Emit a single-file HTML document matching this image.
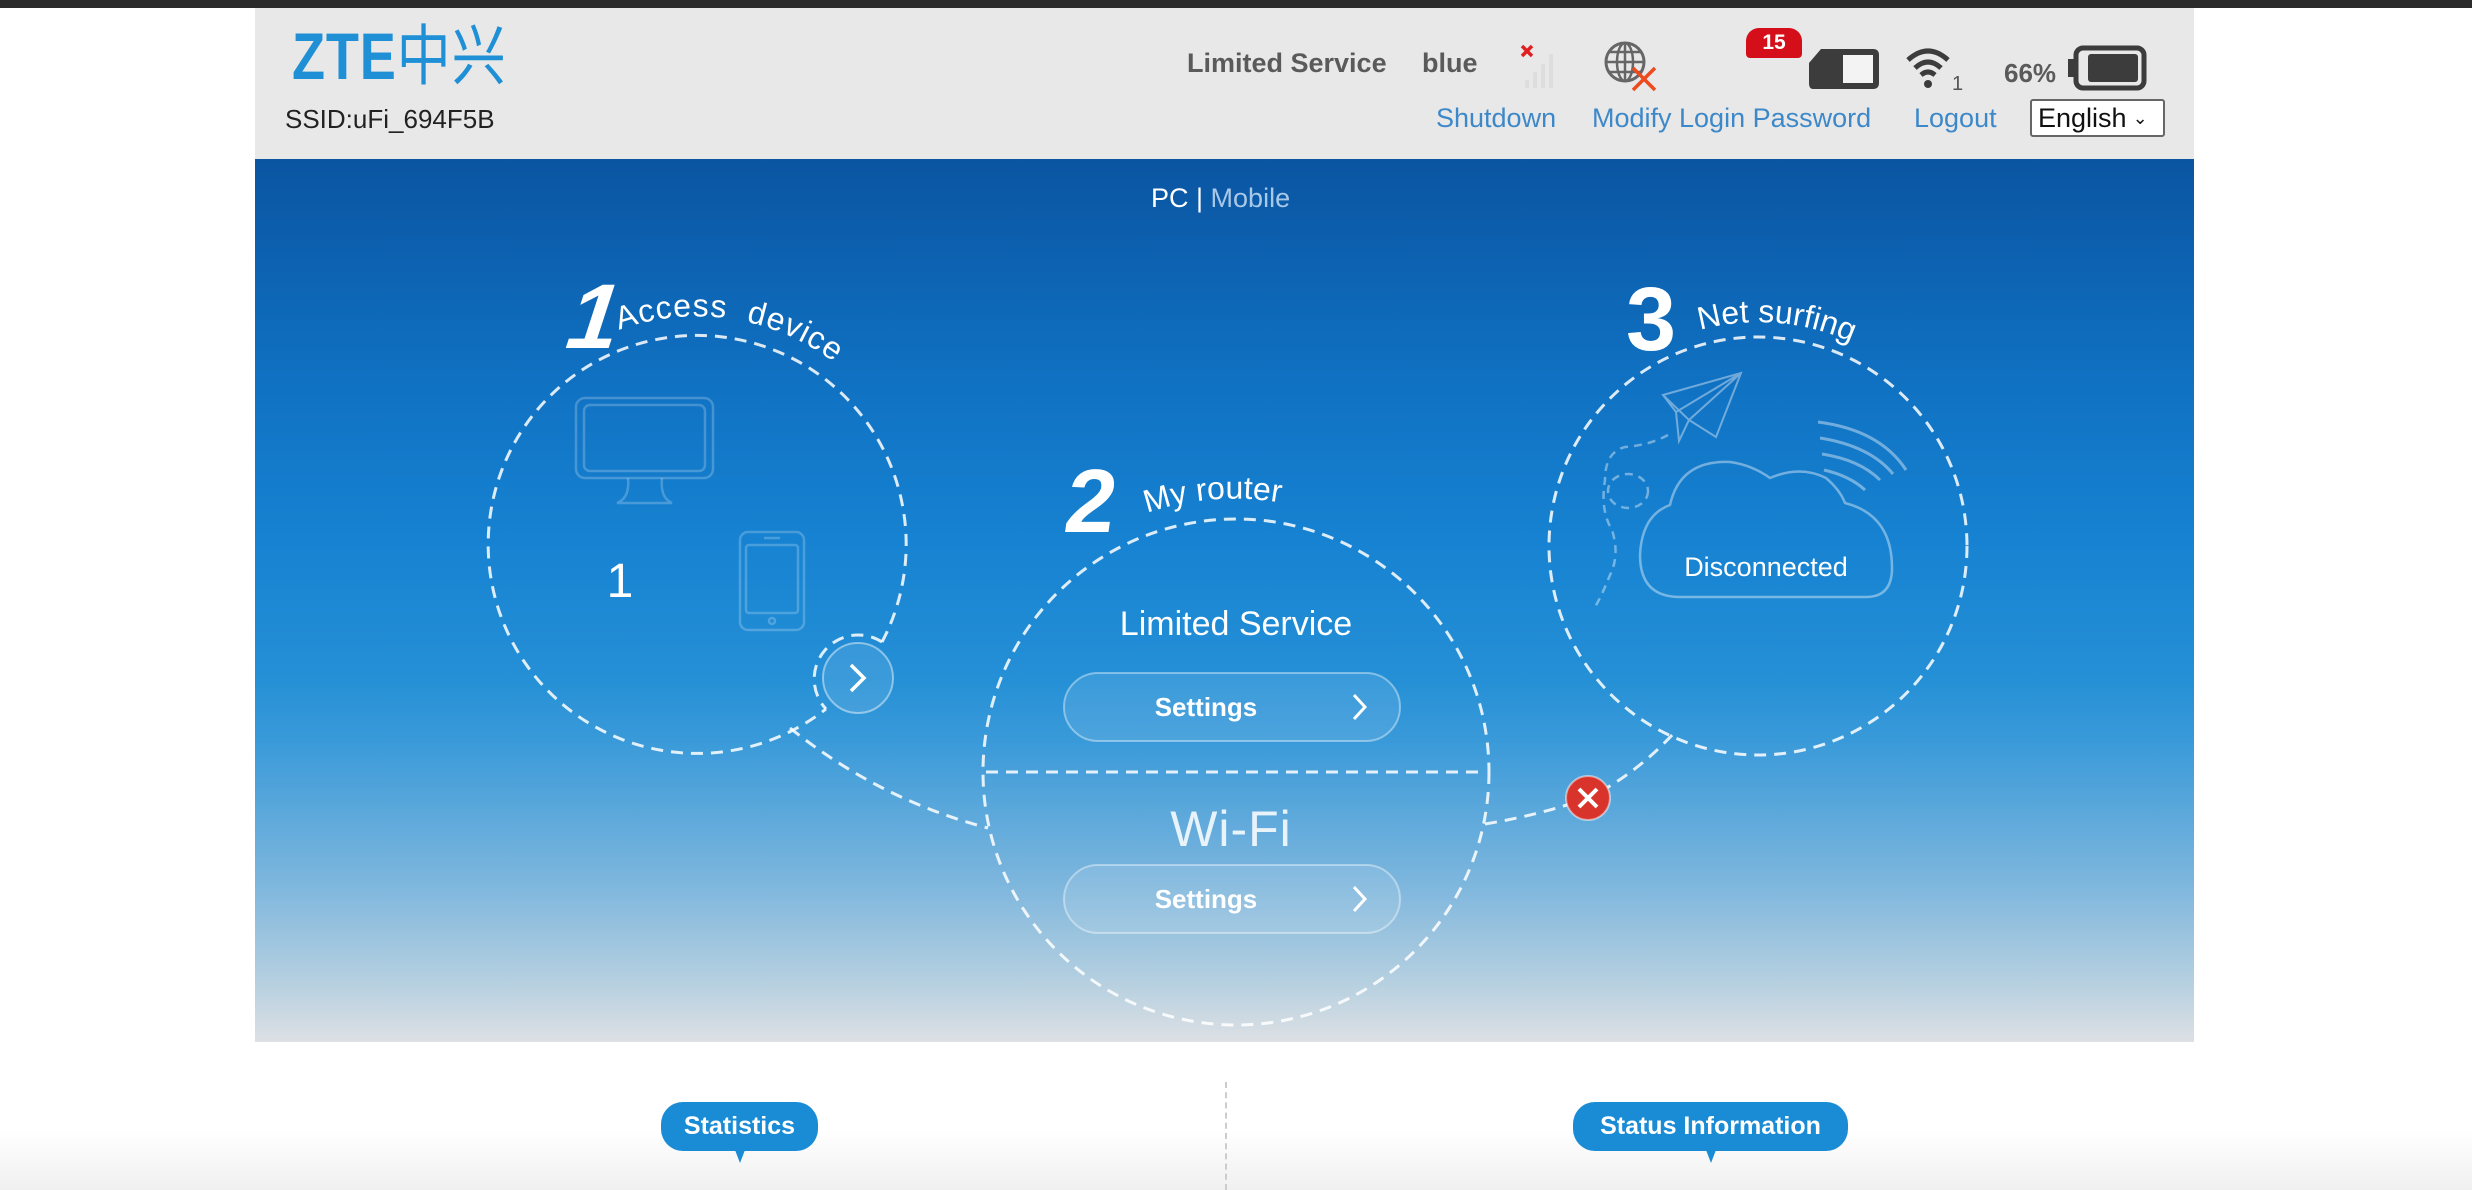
<!DOCTYPE html>
<html><head><meta charset="utf-8">
<style>
*{margin:0;padding:0;box-sizing:border-box}
html,body{width:2472px;height:1190px;overflow:hidden;background:#fff;font-family:"Liberation Sans",Arial,sans-serif;position:relative}
.topbar{position:absolute;left:0;top:0;width:2472px;height:8px;background:#2b2b2b}
.header{position:absolute;left:255px;top:8px;width:1939px;height:151px;background:#e8e8e8}
.panel{position:absolute;left:255px;top:159px;width:1939px;height:883px;
background:linear-gradient(to bottom,#0a55a2 0%,#1071c2 25%,#1783d2 44%,#2590d6 59%,#3a9ad9 66%,#7db6dd 82%,#b4cfe0 93%,#dde0e4 100%)}
.t{position:absolute;white-space:nowrap}
.link{color:#3d88c9;font-size:27px}
.bottomfade{position:absolute;left:0;top:1130px;width:2472px;height:60px;background:linear-gradient(to bottom,rgba(244,244,244,0),rgba(240,240,240,1));}
.bubble{position:absolute;background:#1a8cd6;color:#fff;font-weight:bold;font-size:25px;height:49px;line-height:49px;border-radius:22px;text-align:center}
.bubble:after{content:"";position:absolute;left:50%;margin-left:-5px;bottom:-12px;border-left:5px solid transparent;border-right:5px solid transparent;border-top:13px solid #1a8cd6}
</style></head><body>
<div class="topbar"></div>
<div class="header"></div>
<div class="t" style="left:292px;top:20px;font-size:66px;line-height:72px;font-weight:bold;color:#1f8fd6;letter-spacing:1px;font-family:'Liberation Sans','Noto Sans CJK SC',sans-serif;transform:scale(0.82,1);transform-origin:left top">ZTE<span style="font-weight:normal">中兴</span></div>
<div class="t" style="left:285px;top:104px;font-size:26px;color:#222">SSID:uFi_694F5B</div>

<div class="t" style="left:1187px;top:48px;font-size:27px;font-weight:bold;color:#5a5a5a">Limited Service</div>
<div class="t" style="left:1422px;top:48px;font-size:27px;font-weight:bold;color:#5a5a5a">blue</div>
<svg class="t" style="left:1515px;top:40px" width="50" height="50" viewBox="0 0 50 50">
<path d="M7 6 L17 16 M17 6 L7 16" stroke="#e02020" stroke-width="3.5"/>
<rect x="10" y="40" width="4" height="8" fill="#ddd"/><rect x="18" y="32" width="4" height="16" fill="#ddd"/><rect x="26" y="24" width="4" height="24" fill="#ddd"/><rect x="34" y="14" width="4" height="34" fill="#ddd"/>
</svg>
<svg class="t" style="left:1603px;top:40px" width="60" height="52" viewBox="0 0 60 52">
<circle cx="22" cy="22" r="19" fill="none" stroke="#666" stroke-width="3"/>
<ellipse cx="22" cy="22" rx="8" ry="19" fill="none" stroke="#666" stroke-width="2.5"/>
<path d="M3 22 H41 M6 12 H38 M6 32 H38 M22 3 V41" stroke="#666" stroke-width="2.5"/>
<path d="M30 28 L52 50 M52 28 L30 50" stroke="#ee4a1d" stroke-width="3.5"/>
</svg>
<div class="t" style="left:1746px;top:28px;width:56px;height:30px;background:#d40f1a;border-radius:13px 13px 4px 4px;color:#fff;font-weight:bold;font-size:21px;text-align:center;line-height:30px">15</div>
<svg class="t" style="left:1807px;top:47px" width="74" height="44" viewBox="0 0 74 44">
<path d="M14 2 H66 Q72 2 72 8 V36 Q72 42 66 42 H6 Q2 42 2 36 V16 Z" fill="#3c3c3c"/>
<rect x="36" y="8" width="30" height="28" fill="#f3f3f3"/>
</svg>
<svg class="t" style="left:1904px;top:44px" width="64" height="48" viewBox="0 0 64 48">
<path d="M4 16 Q24 -2 44 16" fill="none" stroke="#3c3c3c" stroke-width="5"/>
<path d="M11 24 Q24 12 37 24" fill="none" stroke="#3c3c3c" stroke-width="5"/>
<path d="M17 31 Q24 25 31 31" fill="none" stroke="#3c3c3c" stroke-width="5"/>
<circle cx="24" cy="40" r="4" fill="#3c3c3c"/>
<text x="48" y="46" font-size="20" fill="#555" font-family="Liberation Sans">1</text>
</svg>
<div class="t" style="left:2004px;top:58px;font-size:26px;font-weight:bold;color:#5a5a5a">66%</div>
<svg class="t" style="left:2068px;top:45px" width="80" height="46" viewBox="0 0 80 46">
<rect x="0" y="14" width="6" height="18" fill="#3c3c3c"/>
<rect x="8" y="3" width="68" height="40" rx="7" fill="none" stroke="#3c3c3c" stroke-width="5"/>
<rect x="20" y="9" width="50" height="28" rx="3" fill="#3c3c3c"/>
</svg>

<div class="t link" style="left:1436px;top:103px">Shutdown</div>
<div class="t link" style="left:1592px;top:103px">Modify Login Password</div>
<div class="t link" style="left:1914px;top:103px">Logout</div>
<div class="t" style="left:2030px;top:99px;width:135px;height:38px;border:2px solid #666;border-radius:3px;background:#fff;font-size:27px;color:#111;line-height:34px;padding-left:6px">English<span style="font-size:18px;margin-left:6px;position:relative;top:-3px">&#8964;</span></div>

<div class="panel"></div>
<div class="t" style="left:1151px;top:183px;font-size:27px;color:#fff">PC <span>|</span> <span style="color:#a9c8e8">Mobile</span></div>

<svg class="t" style="left:0;top:0" width="2472" height="1190" viewBox="0 0 2472 1190">
<defs>
<path id="p1" d="M 619 330 A 228 228 0 0 1 894 430"/>
<path id="p2" d="M 1147 513 A 272 272 0 0 1 1380 541"/>
<path id="p3" d="M 1700 330 A 224 224 0 0 1 1930 402"/>
</defs>
<g fill="none" stroke="rgba(255,255,255,0.85)" stroke-width="3" stroke-dasharray="12 8">
<path d="M 882 642 A 209 209 0 1 0 826 709"/>
<path d="M 882 642 A 44 44 0 0 0 826 709"/>
<circle cx="1236" cy="772" r="253"/>
<circle cx="1758" cy="546" r="209"/>
<line x1="986" y1="772" x2="1486" y2="772"/>
<path d="M 790 728 Q 880 800 988 828"/>
<path d="M 1485 824 Q 1540 815 1588 798 Q 1635 775 1674 733"/>
</g>
<circle cx="858" cy="678" r="35" fill="rgba(255,255,255,0.1)" stroke="rgba(255,255,255,0.45)" stroke-width="2"/>
<path d="M851 665 L864 678 L851 691" fill="none" stroke="#fff" stroke-width="3.5"/>
<circle cx="1588" cy="798" r="22" fill="#d9342c" stroke="rgba(255,255,255,0.5)" stroke-width="2"/>
<path d="M1579 789 L1597 807 M1597 789 L1579 807" stroke="#fff" stroke-width="4"/>

<g fill="#fff" font-family="Liberation Sans,sans-serif">
<text font-size="32" letter-spacing="1"><textPath href="#p1">Access&#160;&#160;device</textPath></text>
<text font-size="32"><textPath href="#p2">My router</textPath></text>
<text font-size="32"><textPath href="#p3">Net surfing</textPath></text>
<text x="0" y="0" font-size="92" font-weight="bold" transform="translate(560,348) skewX(-18)">1</text>
<text x="0" y="0" font-size="90" font-weight="bold" transform="translate(1062,532) skewX(-8)">2</text>
<text x="1626" y="350" font-size="90" font-weight="bold">3</text>
<text x="620" y="597" font-size="48" text-anchor="middle">1</text>
<text x="1236" y="635" font-size="34" text-anchor="middle">Limited Service</text>
<text x="1231" y="846" font-size="50" text-anchor="middle" fill="rgba(255,255,255,0.85)" letter-spacing="1">Wi-Fi</text>
<text x="1206" y="716" font-size="26" font-weight="bold" text-anchor="middle">Settings</text>
<text x="1206" y="908" font-size="26" font-weight="bold" text-anchor="middle">Settings</text>
<text x="1766" y="576" font-size="27" text-anchor="middle">Disconnected</text>
</g>
<rect x="1064" y="673" width="336" height="68" rx="34" fill="rgba(255,255,255,0.1)" stroke="rgba(255,255,255,0.4)" stroke-width="2"/>
<rect x="1064" y="865" width="336" height="68" rx="34" fill="rgba(255,255,255,0.1)" stroke="rgba(255,255,255,0.4)" stroke-width="2"/>
<path d="M1354 695 L1365 707 L1354 719 M1354 887 L1365 899 L1354 911" fill="none" stroke="#fff" stroke-width="3"/>

<g fill="none" stroke="rgba(255,255,255,0.22)" stroke-width="2.5">
<rect x="576" y="398" width="137" height="80" rx="9"/>
<rect x="584" y="405" width="121" height="66" rx="6"/>
<path d="M628 478 Q630 498 617 503 H672 Q660 498 662 478"/>
<rect x="740" y="532" width="64" height="98" rx="8"/>
<rect x="746" y="545" width="52" height="68" rx="3"/>
<path d="M764 538 H780"/><circle cx="772" cy="621" r="3"/>
</g>
<g fill="none" stroke="rgba(255,255,255,0.4)" stroke-width="2">
<path d="M1663 395 L1741 373 L1716 437 L1689 420 Z M1741 373 L1689 420 L1679 441 L1676 412 Z M1663 395 L1676 412"/>
<path d="M1818 422 Q1880 430 1906 470 M1820 438 Q1870 446 1893 474 M1822 454 Q1860 460 1880 480 M1824 470 Q1850 476 1865 490" stroke-width="3"/>
<path d="M1670 505 Q1680 460 1730 462 Q1752 465 1770 478 Q1800 465 1826 478 Q1840 490 1845 503 Q1892 515 1892 568 Q1892 597 1866 597 L1680 597 Q1640 597 1640 555 Q1642 515 1670 505 Z" stroke-width="2.5"/>
</g>
<g fill="none" stroke="rgba(255,255,255,0.4)" stroke-width="2.5" stroke-dasharray="8 6">
<path d="M1668 435 Q1650 445 1625 447 Q1605 452 1605 480 Q1600 510 1612 530 Q1620 555 1610 575 Q1600 600 1593 610"/>
<ellipse cx="1628" cy="491" rx="20" ry="17"/>
</g>
</svg>

<div class="bottomfade"></div>
<div class="t" style="left:1225px;top:1082px;height:108px;border-left:2px dashed #ccc"></div>
<div class="bubble" style="left:661px;top:1102px;width:157px">Statistics</div>
<div class="bubble" style="left:1573px;top:1102px;width:275px">Status Information</div>
</body></html>
